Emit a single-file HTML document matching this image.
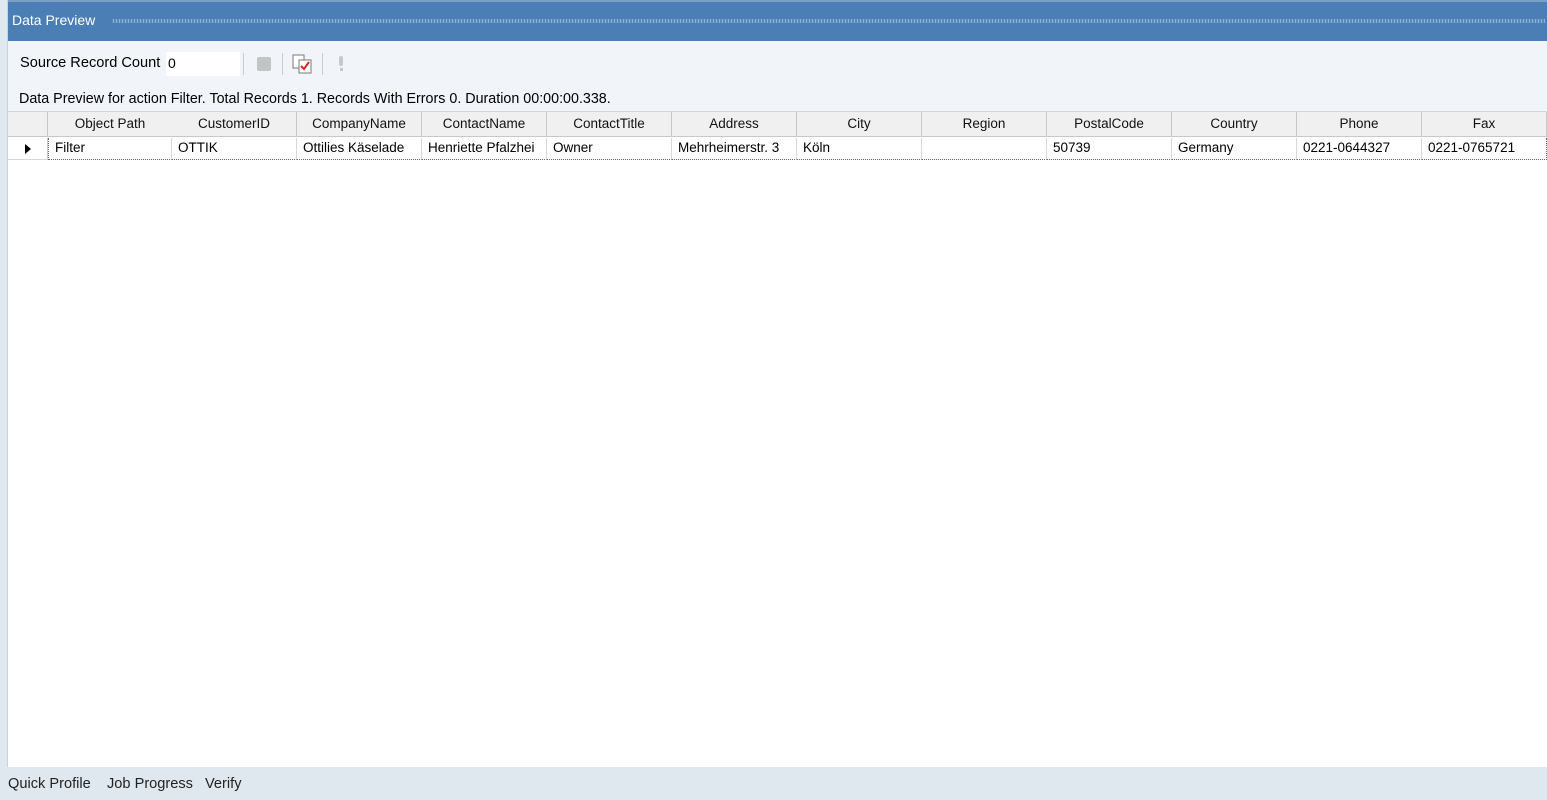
<!DOCTYPE html>
<html><head><style>
*{margin:0;padding:0;box-sizing:border-box}
body{width:1547px;height:800px;overflow:hidden;background:#dfe7ef;font-family:"Liberation Sans",sans-serif;font-size:13px;color:#000;position:relative}
.a{position:absolute}
.title{left:8px;top:0;width:1539px;height:41px;background:#4a7eb5;border-top:2px solid #7aa0c8}
.title span{position:absolute;left:4px;top:10px;color:#fff;font-size:14px}
.dots{position:absolute;left:104px;top:17px;right:2px;height:4px;background-image:radial-gradient(circle,#8fb0d4 0.8px,transparent 1px);background-size:3px 2px}
.tb{left:8px;top:41px;width:1539px;height:71px;background:#f1f5f9}
.grid{left:8px;top:111px;width:1539px;height:656px;background:#fff;border-top:1px solid #d5d5d5}
.hd{position:absolute;top:0;height:25px;background:#f0f0f0;border-right:1px solid #c8c8c8;border-bottom:1px solid #c8c8c8;text-align:center;line-height:24px;font-size:13.5px;color:#111}
.cl{position:absolute;top:26px;height:22px;border-right:1px solid #d8d8d8;border-bottom:1px dotted #666;padding-left:6px;line-height:20px;font-size:13.5px;white-space:nowrap;overflow:hidden}
.tab{top:776px;font-size:14.6px;color:#222}
</style></head><body>
<div class="a" style="left:0;top:0;width:8px;height:767px;background:#dfe7ef;border-right:1px solid #c9d3dd"></div>
<div class="a title"><span>Data Preview</span><div class="dots"></div></div>
<div class="a tb">
 <div class="a" style="left:12px;top:14px;font-size:14.6px">Source Record Count</div>
 <div class="a" style="left:158px;top:11px;width:74px;height:24px;background:#fff;padding:3px 2px;font-size:14px">0</div>
 <div class="a" style="left:235px;top:12px;width:1px;height:22px;background:#ccc"></div>
 <div class="a" style="left:249px;top:16px;width:14px;height:14px;background:#c4c4c4;border-radius:2px"></div>
 <div class="a" style="left:274px;top:12px;width:1px;height:22px;background:#ccc"></div>
 <svg class="a" style="left:284px;top:12px" width="22" height="22" viewBox="0 0 22 22"><rect x="1" y="2" width="11" height="13" fill="#fff" stroke="#777"/><rect x="7" y="7" width="12" height="13" fill="#fff" stroke="#777"/><path d="M9 13l3 3 5-7" stroke="#d22" stroke-width="2" fill="none"/></svg>
 <div class="a" style="left:314px;top:12px;width:1px;height:22px;background:#ccc"></div>
 <div class="a" style="left:331px;top:15px;width:4px;height:10px;background:#c8c8c8;border-radius:2px"></div>
 <div class="a" style="left:332px;top:27px;width:3px;height:3px;background:#c8c8c8"></div>
 <div class="a" style="left:11px;top:50px;font-size:14.3px;white-space:nowrap">Data Preview for action Filter. Total Records 1. Records With Errors 0. Duration 00:00:00.338.</div>
</div>
<div class="a grid">
 <div class="hd" style="left:0;width:40px"></div>
 <div class="hd" style="left:40px;width:125px">Object Path</div>
 <div class="hd" style="left:164px;width:125px">CustomerID</div>
 <div class="hd" style="left:289px;width:125px">CompanyName</div>
 <div class="hd" style="left:414px;width:125px">ContactName</div>
 <div class="hd" style="left:539px;width:125px">ContactTitle</div>
 <div class="hd" style="left:664px;width:125px">Address</div>
 <div class="hd" style="left:789px;width:125px">City</div>
 <div class="hd" style="left:914px;width:125px">Region</div>
 <div class="hd" style="left:1039px;width:125px">PostalCode</div>
 <div class="hd" style="left:1164px;width:125px">Country</div>
 <div class="hd" style="left:1289px;width:125px">Phone</div>
 <div class="hd" style="left:1414px;width:125px">Fax</div>
 <div class="a" style="left:0;top:26px;width:40px;height:22px;border-right:1px solid #c8c8c8;border-bottom:1px solid #d8d8d8"><div class="a" style="left:17px;top:6px;width:0;height:0;border-left:6px solid #000;border-top:5px solid transparent;border-bottom:5px solid transparent"></div></div>
 <div class="cl" style="left:40px;width:124px;border-left:1px dotted #666">Filter</div>
 <div class="cl" style="left:164px;width:125px">OTTIK</div>
 <div class="cl" style="left:289px;width:125px">Ottilies Käselade</div>
 <div class="cl" style="left:414px;width:125px">Henriette Pfalzhei</div>
 <div class="cl" style="left:539px;width:125px">Owner</div>
 <div class="cl" style="left:664px;width:125px">Mehrheimerstr. 3</div>
 <div class="cl" style="left:789px;width:125px">Köln</div>
 <div class="cl" style="left:914px;width:125px"></div>
 <div class="cl" style="left:1039px;width:125px">50739</div>
 <div class="cl" style="left:1164px;width:125px">Germany</div>
 <div class="cl" style="left:1289px;width:125px">0221-0644327</div>
 <div class="cl" style="left:1414px;width:125px;border-right:1px dotted #666">0221-0765721</div>
</div>
<div class="a tab" style="left:8px">Quick Profile</div>
<div class="a tab" style="left:107px">Job Progress</div>
<div class="a tab" style="left:205px">Verify</div>
</body></html>
